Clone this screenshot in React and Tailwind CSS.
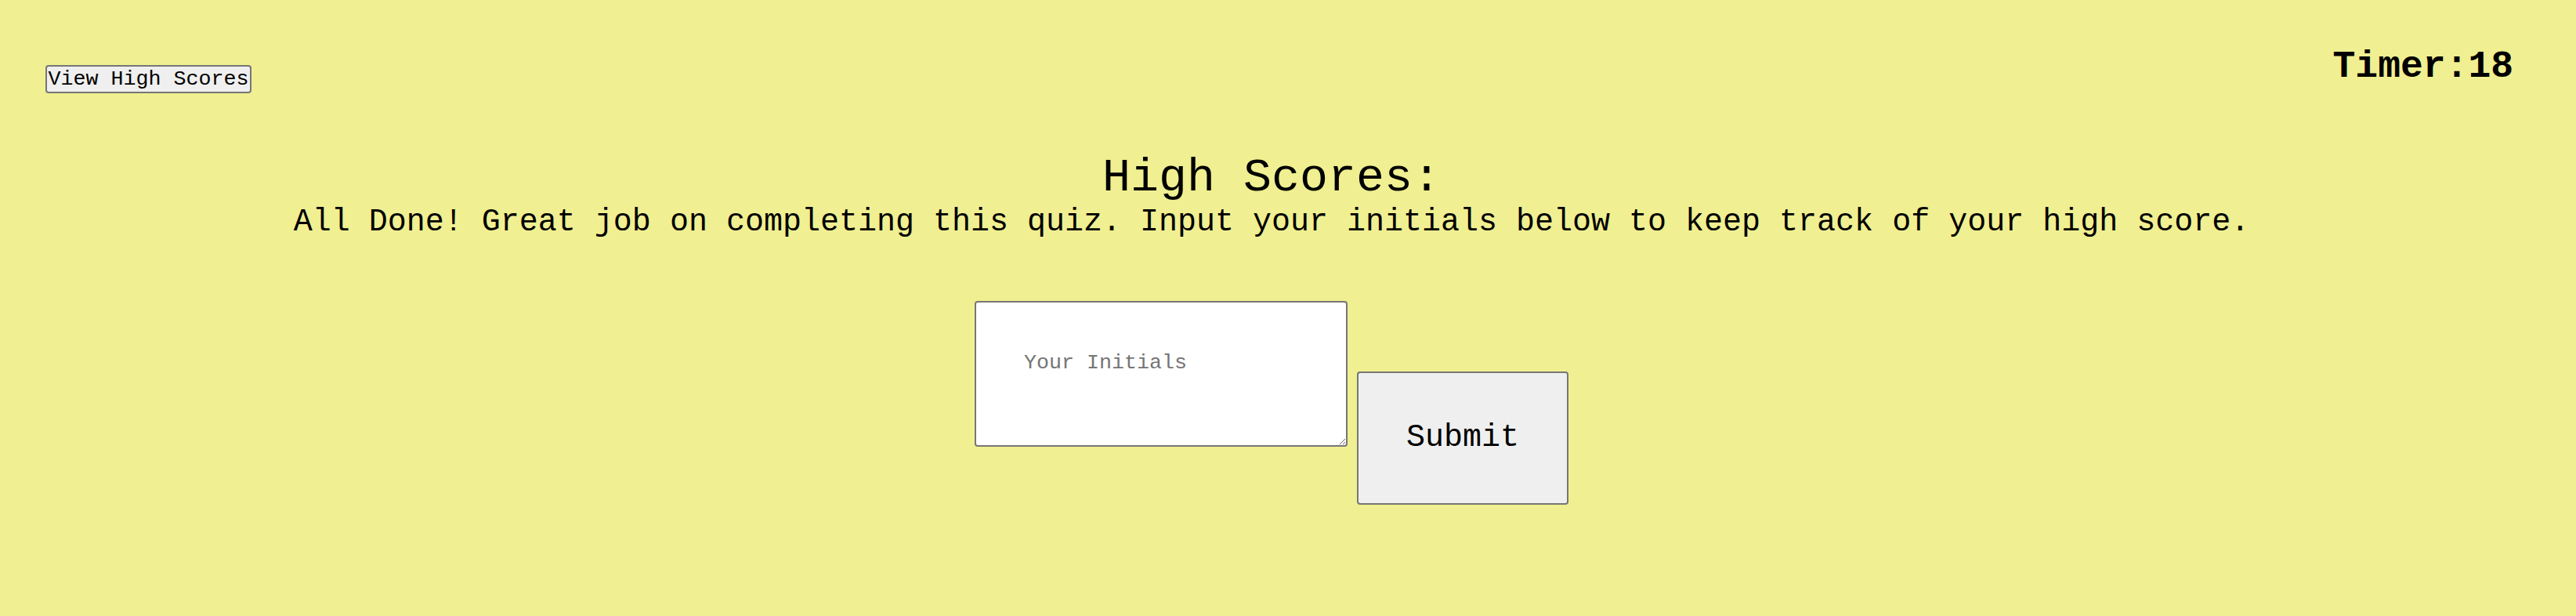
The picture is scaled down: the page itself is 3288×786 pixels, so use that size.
import React from "react";

const MONO = '"Courier New", Courier, "Nimbus Mono PS", "Liberation Mono", monospace';

export default function App() {
  return (
    <div
      className="min-h-[786px] w-full bg-[#f0ef91] text-black"
      style={{ fontFamily: MONO }}
    >
      <header className="flex items-start justify-between">
        <button
          className="ml-[58px] mt-[83px] flex h-[36px] w-[263px] items-center justify-center rounded-[4px] border-2 border-[#767676] bg-[#efefef] p-0 text-[26.67px] leading-none text-black"
          style={{ fontFamily: MONO }}
        >
          View High Scores
        </button>
        <div className="mr-[80px] mt-[58px] text-[48px] font-bold leading-[54px]">
          Timer:18
        </div>
      </header>
      <main className="flex flex-col items-center pr-[42px]">
        <h1 className="mt-[74px] text-[60px] font-normal leading-[68px]">
          High Scores:
        </h1>
        <p className="text-[40px] leading-[45px]">
          All Done! Great job on completing this quiz. Input your initials below to keep track of your high score.
        </p>
        <div className="mt-[78px] flex items-start gap-[12px]">
          <textarea
            rows={2}
            placeholder="Your Initials"
            className="h-[186px] w-[476px] resize rounded-[4px] border-2 border-[#767676] bg-white px-[61px] pt-[62px] text-[26.67px] leading-[30px] text-black placeholder:text-[#757575]"
            style={{ fontFamily: MONO }}
          />
          <button
            className="mt-[90px] flex h-[170px] w-[270px] items-center justify-center rounded-[4px] border-2 border-[#767676] bg-[#efefef] text-[40px] leading-none text-black"
            style={{ fontFamily: MONO }}
          >
            Submit
          </button>
        </div>
      </main>
    </div>
  );
}
